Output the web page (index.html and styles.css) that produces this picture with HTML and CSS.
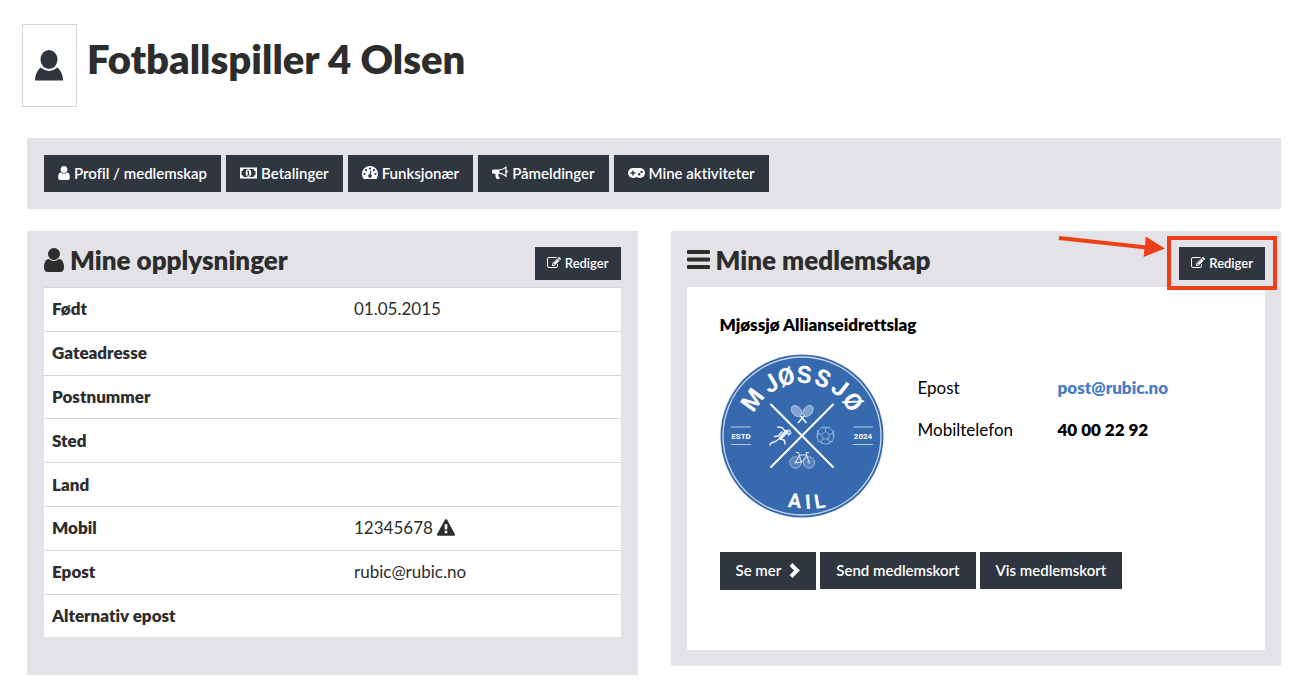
FILE: index.html
```html
<!DOCTYPE html>
<html lang="no">
<head>
    <meta charset="UTF-8">
    <meta name="viewport" content="width=device-width, initial-scale=1.0">
    <title>Fotballspiller 4 Olsen</title>
    <link rel="stylesheet" href="styles.css">
</head>
<body>
    <!-- shared icons -->
    <svg class="icon-defs" aria-hidden="true">
        <symbol id="icon-user" viewBox="256 128 1280 1536">
            <path d="M1536 1399q0 109-62.5 187t-150.5 78h-854q-88 0-150.5-78t-62.5-187q0-85 8.5-160.5t31.5-152 58.5-131 94-89 134.5-34.5q131 128 313 128t313-128q76 0 134.5 34.5t94 89 58.5 131 31.5 152 8.5 160.5zm-256-887q0 159-112.5 271.5t-271.5 112.5-271.5-112.5-112.5-271.5 112.5-271.5 271.5-112.5 271.5 112.5 112.5 271.5z"/>
        </symbol>
        <symbol id="icon-edit" viewBox="0 0 1792 1792">
            <path d="M888 1184l116-116-152-152-116 116v56h96v96h56zm440-720q-16-16-33 1l-350 350q-17 17-1 33t33-1l350-350q17-17 1-33zm80 594v190q0 119-84.5 203.5t-203.5 84.5h-832q-119 0-203.5-84.5t-84.5-203.5v-832q0-119 84.5-203.5t203.5-84.5h832q63 0 117 25 15 7 18 23 3 17-9 29l-49 49q-14 14-32 8-23-6-45-6h-832q-66 0-113 47t-47 113v832q0 66 47 113t113 47h832q66 0 113-47t47-113v-126q0-13 9-22l64-64q15-15 35-7t20 29zm-96-738l288 288-672 672h-288v-288zm444 132l-92 92-288-288 92-92q28-28 68-28t68 28l152 152q28 28 28 68t-28 68z"/>
        </symbol>
    </svg>

    <header class="profile">
        <div class="avatar">
            <svg width="28" height="31" viewBox="0 0 28 31">
                <ellipse cx="14" cy="9.5" rx="8.5" ry="9.5"/>
                <path d="M0 30.500q0-8 5.500-13q8.500 7 17 0q5.500 5 5.500 13z"/>
            </svg>
        </div>
        <h1>Fotballspiller 4 Olsen</h1>
    </header>

    <main>
        <nav class="menu">
            <button type="button" class="btn">
                <svg width="12" height="14"><use href="#icon-user"/></svg>
                Profil / medlemskap
            </button>
            <button type="button" class="btn">
                <svg width="17" height="12" viewBox="0 0 17 12">
                    <path fill-rule="evenodd" d="M0 .5h17v11H0zM3.500 2q0 2-2 2v4q2 0 2 2h10q0-2 2-2V4q-2 0-2-2z"/>
                    <path fill-rule="evenodd" d="M8.500 2.200a2.800 3.800 0 1 1 0 7.600a2.800 3.800 0 1 1 0-7.600zM8 3.700l-1.200 1 .5.700.6-.4v2.500h-1v.9h3v-.9h-.9V3.700z"/>
                </svg>
                Betalinger
            </button>
            <button type="button" class="btn">
                <svg width="16" height="13" viewBox="0 0 16 13">
                    <path d="M8 0a8 8 0 0 1 8 8q0 2.600-1.200 4.500-.3.500-.8.500H2q-.5 0-.8-.5Q0 10.600 0 8a8 8 0 0 1 8-8z"/>
                    <g class="cut">
                        <circle cx="2.500" cy="8" r="1.100"/><circle cx="4.100" cy="4.200" r="1.100"/><circle cx="8" cy="2.500" r="1.100"/>
                        <circle cx="11.900" cy="4.200" r="1.100"/><circle cx="13.500" cy="8" r="1.100"/>
                        <path d="M8.600 4.600l1 .2-.8 3.700a1.700 1.700 0 1 1-1-.2z"/>
                    </g>
                </svg>
                Funksjonær
            </button>
            <button type="button" class="btn">
                <svg width="16" height="14" viewBox="0 0 16 14">
                    <path fill-rule="evenodd" d="M14.500 0v4.200a1.200 1.200 0 0 1 0 2.500V11.500q-3.500-3.500-7.700-3.800-1 .8-.2 1.700-.5.900.3 1.600l1.200 1.100q-.6 1.300-3.200.9-.7-.2-.9-1.100-1-2.600-.5-4.200H1.500Q0 7.500 0 6.200V4.800q0-1.300 1.500-1.300H6Q10.500 3.500 14.500 0zM13.300 2.300Q10.500 4.300 7.200 4.600v1.900q3.300.3 6.100 2.600z"/>
                </svg>
                Påmeldinger
            </button>
            <button type="button" class="btn">
                <svg width="17" height="10" viewBox="0 0 17 10">
                    <rect width="17" height="10" rx="5"/>
                    <path class="cut" d="M4.200 2.500h1.400v1.800h1.900v1.400H5.600v1.800H4.200V5.700H2.400V4.300h1.800z"/>
                    <circle class="cut" cx="11.200" cy="6.200" r="1.200"/><circle class="cut" cx="13.600" cy="3.900" r="1.200"/>
                    <path class="cut" d="M6.500 10q2-1.800 4 0z"/>
                </svg>
                Mine aktiviteter
            </button>
        </nav>

        <div class="panels">
            <section class="panel info">
                <div class="panel-head">
                    <h2><svg width="20" height="24"><use href="#icon-user"/></svg>Mine opplysninger</h2>
                    <button type="button" class="btn btn-small">
                        <svg width="14" height="14"><use href="#icon-edit"/></svg>
                        Rediger
                    </button>
                </div>
                <table>
                    <tr><th scope="row">Født</th><td>01.05.2015</td></tr>
                    <tr><th scope="row">Gateadresse</th><td></td></tr>
                    <tr><th scope="row">Postnummer</th><td></td></tr>
                    <tr><th scope="row">Sted</th><td></td></tr>
                    <tr><th scope="row">Land</th><td></td></tr>
                    <tr>
                        <th scope="row">Mobil</th>
                        <td>12345678
                            <svg class="warning" width="18" height="17" viewBox="0 0 1792 1664">
                                <path d="M1024 1375v-190q0-14-9.500-23.500t-22.500-9.500h-192q-13 0-22.500 9.500t-9.500 23.500v190q0 14 9.500 23.500t22.500 9.500h192q13 0 22.500-9.500t9.500-23.500zm-2-374l18-459q0-12-10-19-13-11-24-11h-220q-11 0-24 11-10 7-10 21l17 457q0 10 10 16.500t24 6.500h185q14 0 23.500-6.500t10.500-16.500zm-14-934l768 1408q35 63-2 126-17 29-46.500 46t-63.500 17h-1536q-34 0-63.500-17t-46.500-46q-37-63-2-126l768-1408q17-31 47-49t65-18 65 18 47 49z"/>
                            </svg>
                        </td>
                    </tr>
                    <tr><th scope="row">Epost</th><td>rubic@rubic.no</td></tr>
                    <tr><th scope="row">Alternativ epost</th><td></td></tr>
                </table>
            </section>

            <section class="panel membership">
                <div class="panel-head">
                    <h2>
                        <svg width="23" height="19" viewBox="0 0 23 19">
                            <rect width="23" height="4" rx="1"/><rect y="7.500" width="23" height="4" rx="1"/><rect y="15" width="23" height="4" rx="1"/>
                        </svg>Mine medlemskap
                    </h2>
                    <div class="marked">
                        <button type="button" class="btn btn-small">
                            <svg width="14" height="14"><use href="#icon-edit"/></svg>
                            Rediger
                        </button>
                        <svg class="arrow" width="108" height="24" viewBox="0 0 108 24">
                            <path d="M2.300 1L88 10.200l.8-8.700L108 13.500 86.500 22l.9-7.700L1.700 5z"/>
                        </svg>
                    </div>
                </div>
                <div class="card">
                    <h3>Mjøssjø Allianseidrettslag</h3>
                    <div class="club">
                        <svg class="logo" width="164" height="164" viewBox="0 0 164 164">
                            <circle cx="82" cy="82" r="81.500" fill="#3769ae"/>
                            <circle cx="82" cy="82" r="79" fill="none" stroke="#c9d8ec" stroke-width="1.300"/>
                            <g class="logo-text">
                                <text font-size="24" x="32.900 49 60.300 76.400 93.100 109.400 121.300" y="59.300 40 32.900 28.700 29.700 36.100 45.500" rotate="-54 -31 -15 2 20 38 56">MJØSSJØ</text>
                                <text font-size="20" x="67.500 85.500 95.500" y="153 155 155" rotate="5 -4 -10">AIL</text>
                                <text font-size="8" text-anchor="middle" x="21" y="85">ESTD</text>
                                <text font-size="8" text-anchor="middle" x="143" y="85">2024</text>
                            </g>
                            <path d="M11 73h20M11 90.500h20M133 73h20M133 90.500h20" stroke="#b4c8e4" stroke-width="1.200"/>
                            <path d="M51 50.500L113 113M113 50.500L51 113" stroke="#fff" stroke-width="2" stroke-linecap="round"/>
                            <!-- rackets -->
                            <g fill="#7fa2d1" stroke="#c9d8ec" stroke-width=".8">
                                <ellipse cx="76.500" cy="57" rx="4.300" ry="6.200" transform="rotate(-40 76.500 57)"/>
                                <ellipse cx="88" cy="57" rx="4.300" ry="6.200" transform="rotate(40 88 57)"/>
                                <path d="M80.500 62l6 7M84 62l-6 7" fill="none" stroke="#fff" stroke-width="1.500"/>
                            </g>
                            <!-- runner -->
                            <g fill="none" stroke="#e6eef8" stroke-linecap="round" stroke-linejoin="round">
                                <path d="M66.500 77.500l-6 6.500" stroke-width="3.600"/>
                                <path d="M65 77l-3-3.500-4.500-.5M67.500 79l1 2 2.500-2M60 84.500l4.500 2 .5 3.500M59 85l-3.500 2.500-4.500 1.500-1 2M62 78l-4 4-3.500.5" stroke-width="1.500"/>
                                <circle cx="69" cy="77" r="1.200"/>
                            </g>
                            <!-- football -->
                            <g fill="none" stroke="#9cb7dc" stroke-width=".9">
                                <circle cx="105.500" cy="81.500" r="8.500"/>
                                <path d="M105.500 77.500l4 3-1.500 4.500h-5l-1.500-4.500zM105.500 77.500v-3l-4-1.500M105.500 74.500l4-1.500M109.500 80.500l3-1 1.500-3.500M112.500 79.500l1.500 4M108 85l2 3-2 2M110 88l3-1M103 85l-2 3 2 2M101 88l-3-1M101.500 80.500l-3-1-1.500-3.500M98.500 79.500l-1.500 4"/>
                            </g>
                            <!-- bicycle -->
                            <g fill="none" stroke="#a9c1e1">
                                <g fill="#5580bc" stroke-width=".9">
                                    <circle cx="75.500" cy="108.500" r="5.700"/><circle cx="89" cy="108.500" r="5.700"/>
                                    <circle cx="75.500" cy="108.500" r="1.300"/><circle cx="89" cy="108.500" r="1.300"/>
                                </g>
                                <path d="M75.500 108.500l4-7.500h7.500l-5.500 7.500zM81.500 108.500l-3-10h-2.500M89 108.500l-3-10h3" stroke="#e0e9f5" stroke-width="1"/>
                            </g>
                        </svg>
                        <dl>
                            <dt>Epost</dt><dd><a href="mailto:post@rubic.no">post@rubic.no</a></dd>
                            <dt>Mobiltelefon</dt><dd>40 00 22 92</dd>
                        </dl>
                    </div>
                    <div class="actions">
                        <button type="button" class="btn btn-more">
                            Se mer
                            <svg width="11" height="15" viewBox="0 0 11 15"><path d="M2 1.500l6 6-6 6" fill="none" stroke="#fff" stroke-width="4"/></svg>
                        </button>
                        <button type="button" class="btn">Send medlemskort</button>
                        <button type="button" class="btn">Vis medlemskort</button>
                    </div>
                </div>
            </section>
        </div>
    </main>
</body>
</html>
```
FILE: styles.css
```css
* {
    box-sizing: border-box;
}
body {
    font-family: Lato, "Liberation Sans", sans-serif;
    font-size: 17px;
    font-variant-ligatures: none;
    line-height: 24px;
    color: #2d2d2d;
    background: white;
    margin: 0;
}
h1, h2, h3, dl, dd {
    margin: 0;
}
h1, h2, h3, th, dd {
    font-weight: 800;
}
svg {
    fill: currentColor;
    flex: none;
}
.icon-defs {
    position: absolute;
    width: 0;
    height: 0;
}
.profile {
    display: flex;
    gap: 10px;
    padding: 24px 22px 0;
}
.avatar {
    display: flex;
    align-items: center;
    justify-content: center;
    width: 55px;
    height: 83px;
    padding-right: 1px;
    border: 1px solid #d6d6d8;
    color: #2f363f;
}
h1 {
    font-size: 40px;
    line-height: 70px;
}
main {
    padding: 31px 9px 0 27px;
}
.menu {
    display: flex;
    gap: 5px;
    padding: 17px;
    background: #e3e2e7;
}
.btn {
    display: flex;
    align-items: center;
    gap: 4px;
    height: 37px;
    padding: 0 14px 2px;
    border: 0;
    background: #2f363f;
    color: white;
    font-family: inherit;
    font-size: 15px;
    font-weight: 600;
    font-variant-ligatures: none;
    white-space: nowrap;
    cursor: pointer;
}
.btn-small {
    height: 33px;
    padding: 0 12px 2px;
    font-size: 13px;
}
.cut {
    fill: #2f363f;
}
.panels {
    display: grid;
    grid-template-columns: 1fr 1fr;
    align-items: start;
    gap: 33px;
    margin-top: 22px;
}
.panel {
    padding: 16px 17px 38px;
    background: #e3e2e7;
}
.membership {
    padding: 16px 16px 16px;
}
.panel-head {
    display: flex;
    justify-content: space-between;
    height: 40px;
}
h2 {
    display: flex;
    align-items: center;
    gap: 6px;
    height: 25px;
    font-size: 26px;
}
table {
    width: 100%;
    height: 350px;
    border-collapse: collapse;
    background: white;
}
th, td {
    padding: 0 8px;
    border-top: 1px solid #d6d6d8;
    text-align: left;
}
th {
    width: 302px;
}
.warning {
    vertical-align: -2px;
}
.marked {
    position: relative;
    height: 33px;
}
/* red frame round the button */
.marked::after {
    content: "";
    position: absolute;
    inset: -11px -12px -10px;
    border: 4px solid #ee4018;
    pointer-events: none;
}
.arrow {
    position: absolute;
    right: 100px;
    top: -12px;
    color: #ee4018;
}
.card {
    padding: 26px 33px 60px;
    background: white;
    color: black;
}
h3 {
    font-size: 17px;
}
.club {
    display: flex;
    gap: 34px;
    margin: 17px 0 34px;
}
.logo-text {
    font-family: Roboto, sans-serif;
    font-weight: bold;
    fill: white;
}
dl {
    display: grid;
    grid-template-columns: 140px auto;
    align-content: start;
    row-gap: 18px;
    padding-top: 22px;
}
a {
    color: #4a7dc4;
    text-decoration: none;
}
.actions {
    display: flex;
    gap: 4px;
}
.actions .btn {
    padding: 0 16px 2px;
}
.actions .btn-more {
    gap: 8px;
    height: 38px;
}
```
